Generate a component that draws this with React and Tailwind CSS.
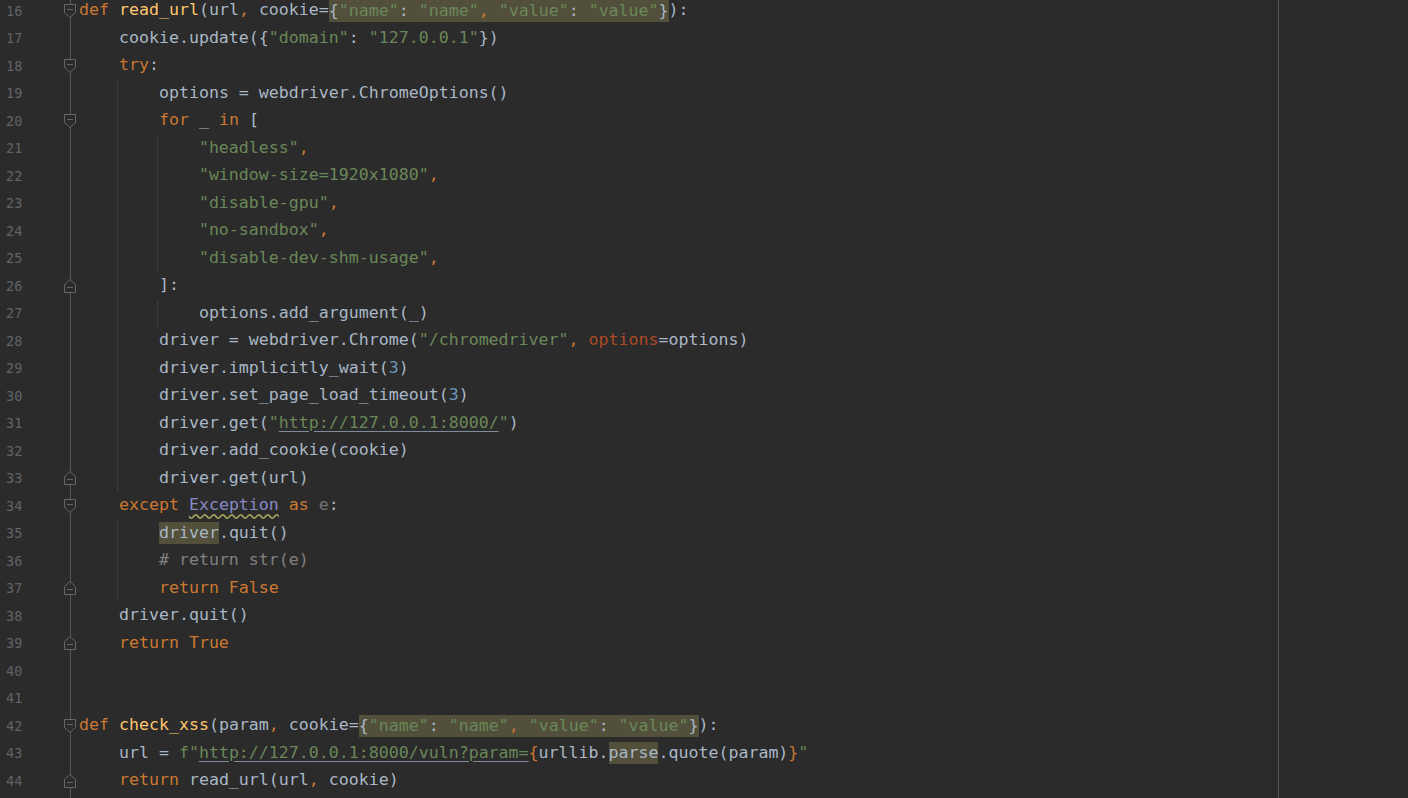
import React from "react";

const C = {
  k: "text-[#cc7832]",
  f: "text-[#ffc66d]",
  t: "text-[#a9b7c6]",
  s: "text-[#6a8759]",
  n: "text-[#6897bb]",
  c: "text-[#808080]",
  p: "text-[#aa4926]",
  u: "text-[#72737a]",
  b: "text-[#8888c6] underline decoration-wavy decoration-[#a3a35e] underline-offset-[3px]",
  url: "text-[#6a8759] underline decoration-[#7f8c99] underline-offset-[3px]",
};

const dict = [
  ["t", "{"], ["s", '"name"'], ["t", ": "], ["s", '"name"'], ["k", ","], ["t", " "],
  ["s", '"value"'], ["t", ": "], ["s", '"value"'], ["t", "}"],
];

// [number, indent, tokens, fold, guides]
const lines = [
  [16, 0, [["k", "def"], ["t", " "], ["f", "read_url"], ["t", "(url"], ["k", ","], ["t", " cookie="], { h: dict }, ["t", "):"]], "top"],
  [17, 4, [["t", "cookie.update({"], ["s", '"domain"'], ["t", ": "], ["s", '"127.0.0.1"'], ["t", "})"]]],
  [18, 4, [["k", "try"], ["t", ":"]], "top"],
  [19, 8, [["t", "options = webdriver.ChromeOptions()"]], null, 1],
  [20, 8, [["k", "for"], ["t", " _ "], ["k", "in"], ["t", " ["]], "top", 1],
  [21, 12, [["s", '"headless"'], ["k", ","]], null, 2],
  [22, 12, [["s", '"window-size=1920x1080"'], ["k", ","]], null, 2],
  [23, 12, [["s", '"disable-gpu"'], ["k", ","]], null, 2],
  [24, 12, [["s", '"no-sandbox"'], ["k", ","]], null, 2],
  [25, 12, [["s", '"disable-dev-shm-usage"'], ["k", ","]], null, 2],
  [26, 8, [["t", "]:"]], "bot", 1],
  [27, 12, [["t", "options.add_argument(_)"]], null, 2],
  [28, 8, [["t", "driver = webdriver.Chrome("], ["s", '"/chromedriver"'], ["k", ","], ["t", " "], ["p", "options"], ["t", "=options)"]], null, 1],
  [29, 8, [["t", "driver.implicitly_wait("], ["n", "3"], ["t", ")"]], null, 1],
  [30, 8, [["t", "driver.set_page_load_timeout("], ["n", "3"], ["t", ")"]], null, 1],
  [31, 8, [["t", "driver.get("], ["s", '"'], ["url", "http://127.0.0.1:8000/"], ["s", '"'], ["t", ")"]], null, 1],
  [32, 8, [["t", "driver.add_cookie(cookie)"]], null, 1],
  [33, 8, [["t", "driver.get(url)"]], "bot", 1],
  [34, 4, [["k", "except"], ["t", " "], ["b", "Exception"], ["t", " "], ["k", "as"], ["t", " "], ["u", "e"], ["t", ":"]], "top"],
  [35, 8, [{ h: [["t", "driver"]] }, ["t", ".quit()"]], null, 1],
  [36, 8, [["c", "# return str(e)"]], null, 1],
  [37, 8, [["k", "return False"]], "bot", 1],
  [38, 4, [["t", "driver.quit()"]]],
  [39, 4, [["k", "return True"]], "bot"],
  [40, 0, []],
  [41, 0, []],
  [42, 0, [["k", "def"], ["t", " "], ["f", "check_xss"], ["t", "(param"], ["k", ","], ["t", " cookie="], { h: dict }, ["t", "):"]], "top"],
  [43, 4, [["t", "url = "], ["s", 'f"'], ["url", "http://127.0.0.1:8000/vuln?param="], ["k", "{"], ["t", "urllib."], { h: [["t", "parse"]] }, ["t", ".quote(param)"], ["k", "}"], ["s", '"']]],
  [44, 4, [["k", "return"], ["t", " read_url(url"], ["k", ","], ["t", " cookie)"]], "bot"],
  ["", 0, []],
];

const Tok = ({ tok }) => {
  if (tok.h) {
    return (
      <span className="inline-block bg-[#52503a] leading-[22px]">
        {tok.h.map((t, i) => (
          <Tok key={i} tok={t} />
        ))}
      </span>
    );
  }
  return <span className={C[tok[0]]}>{tok[1]}</span>;
};

function FoldMark({ kind }) {
  if (kind === "top") {
    return (
      <svg width="12" height="14" viewBox="0 0 12 14" className="absolute left-[-1px] top-1/2 -translate-y-1/2">
        <path d="M0.5 0.5H11.5V8.5L6 13.5L0.5 8.5Z" fill="#2b2b2b" stroke="#666666" />
        <path d="M3 5.5H9" stroke="#666666" />
      </svg>
    );
  }
  return (
    <svg width="12" height="14" viewBox="0 0 12 14" className="absolute left-[-1px] top-1/2 -translate-y-1/2">
      <path d="M0.5 13.5H11.5V5.5L6 0.5L0.5 5.5Z" fill="#2b2b2b" stroke="#666666" />
      <path d="M3 8.5H9" stroke="#666666" />
    </svg>
  );
}

export default function App() {
  return (
    <div className="w-[1408px] h-[798px] bg-[#2b2b2b] overflow-hidden flex">
      {/* gutter */}
      <div className="w-[79px] shrink-0 -mt-[3px] flex flex-col font-['DejaVu_Sans_Mono',monospace]">
        {lines.map(([num, , , fold], idx) => (
          <div key={idx} className="h-[27.5px] shrink-0 flex items-center">
            <span className="w-[65px] pl-[6px] text-[13.5px] text-[#606366]">{num}</span>
            <div className="relative w-[11px] h-full">
              <div className="mx-auto w-px h-full bg-[#555555]" />
              {fold && <FoldMark kind={fold} />}
            </div>
          </div>
        ))}
      </div>

      {/* editor */}
      <div className="w-[1200px] shrink-0 border-r border-[#555555] -mt-[3px] flex flex-col font-['DejaVu_Sans_Mono',monospace] text-[16.6px]">
        {lines.map(([num, indent, toks, , guides], idx) => (
          <div key={idx} className="relative h-[27.5px] shrink-0 flex items-center whitespace-pre text-[#a9b7c6]">
            {guides >= 1 && <span className="absolute left-[38px] top-0 h-full w-px bg-[#3c3c3c]" />}
            {guides >= 2 && <span className="absolute left-[78px] top-0 h-full w-px bg-[#3c3c3c]" />}
            <span className="leading-[22px]">{" ".repeat(indent)}</span>
            {toks.map((t, i) => (
              <Tok key={i} tok={t} />
            ))}
          </div>
        ))}
      </div>
      <div className="flex-1" />
    </div>
  );
}
